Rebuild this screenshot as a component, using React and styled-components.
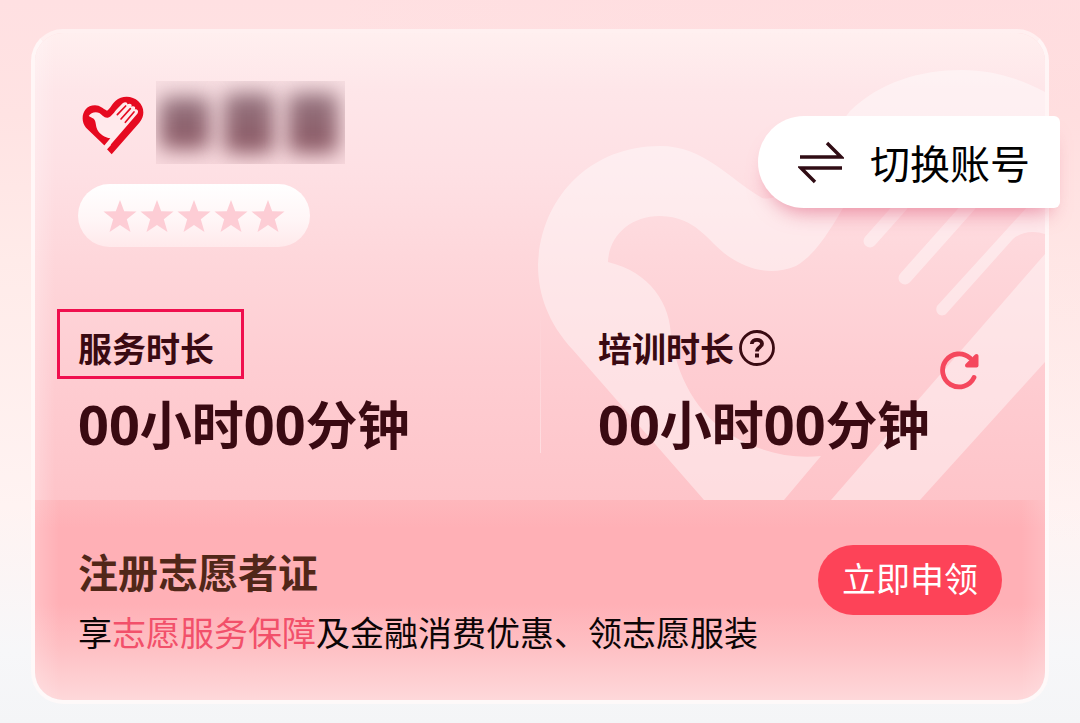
import React, { useState } from 'react'
import styled, { createGlobalStyle } from 'styled-components';

const GlobalStyle = createGlobalStyle`
* {
    box-sizing:border-box;
}
body {
    margin:0;
    font-family:"Noto Sans CJK SC", "Noto Sans", sans-serif;
    color:#3a0a12;
}
button {
    font-family:inherit;
    border:none;
    padding:0;
    cursor:pointer;
}
h2, p {
    margin:0;
}
`;

const Page = styled.main`
min-height:100vh;
padding:29px 31px 19px;
background:
    radial-gradient(ellipse at 100% 15%, rgba(255,210,214,0.3), rgba(255,210,214,0) 50%),
    linear-gradient(180deg, #ffe0e2 0%, #ffe3e3 16%, #ffebe9 36%, #fff3f2 70%, #f7f7f9 90%, #f4f5f7 100%);
`;
const Card = styled.section`
border:4px solid rgba(255,250,249,0.85);
border-top-color:rgba(255,243,243,0.8);
border-radius:32px;
`;
const Overview = styled.div`
position:relative;
padding:48px 0 47px;
border-radius:28px 28px 0 0;
background:
    linear-gradient(90deg, rgba(255,255,255,0.25), rgba(255,255,255,0) 20px),
    linear-gradient(180deg, #ffefef 0%, #fee6e9 12%, #fee0e4 30%, #fed6da 50%, #fecdd2 72%, #fec4c9 100%);
`;
const Watermark = styled.svg`
position:absolute;
right:0;
bottom:0;
width:510px;
height:440px;
`;
const Header = styled.header`
position:relative;
display:flex;
justify-content:space-between;
align-items:flex-start;
padding-left:43px;
`;
const Identity = styled.div`
display:flex;
align-items:center;
gap:12px;
margin-bottom:20px;
`;
const HiddenName = styled.div`
display:flex;
align-items:center;
gap:14px;
width:189px;
height:83px;
padding-left:4px;
overflow:hidden;
background:rgba(160,110,125,0.06);
`;
const Smudge = styled.span`
width:50px;
height:${props => props.$short ? '52px' : '60px'};
border-radius:8px;
background:linear-gradient(180deg, #947580, #8a5662);
filter:blur(10px);
`;
const Stars = styled.div`
display:flex;
align-items:center;
justify-content:center;
gap:3px;
width:232px;
height:63px;
border-radius:32px;
background:linear-gradient(180deg, #fff, #fff5f6 60%, #ffe9eb);
`;
const SwitchBtn = styled.button`
display:flex;
align-items:center;
gap:26px;
height:92px;
margin:35px -15px 0 0;
padding:0 30px 0 40px;
border-radius:46px 6px 6px 46px;
background:#fff;
box-shadow:0 14px 20px -10px rgba(220,80,115,0.6);
color:#000;
font-size:40px;
`;
const Stats = styled.div`
position:relative;
display:grid;
grid-template-columns:1fr 1fr;
margin-top:62px;
`;
const StatCell = styled.div`
display:flex;
align-items:flex-start;
gap:10px;
padding-left:${props => props.$divided ? '36px' : '22px'};
border-left:${props => props.$divided ? '1px solid' : 'none'};
border-image:linear-gradient(180deg, rgba(255,255,255,0), rgba(255,255,255,0.4)) 1;
`;
const StatLabel = styled.div`
display:flex;
align-items:center;
gap:5px;
width:fit-content;
height:70px;
padding:4px 27px 0 18px;
border:3px solid ${props => props.$marked ? '#f00f4e' : 'transparent'};
font-size:34px;
font-weight:700;
line-height:50px;
`;
const StatName = styled.span`
padding-top:4px;
`;
const StatValue = styled.div`
margin-top:14px;
padding-left:21px;
font-size:52px;
font-weight:700;
line-height:60px;
white-space:nowrap;
`;
const Digits = styled.span`
font-family:"Noto Sans", "Open Sans", sans-serif;
font-size:54px;
line-height:50px;
`;
const IconBtn = styled.button`
display:flex;
background:none;
color:${props => props.$red ? '#f5485d' : '#3a0a12'};
margin-top:${props => props.$red ? '42px' : '12px'};
margin-bottom:${props => props.$red ? '0' : '8px'};
`;
const Footer = styled.footer`
display:flex;
justify-content:space-between;
align-items:flex-start;
padding:45px 43px 43px;
border-radius:0 0 28px 28px;
background:
    linear-gradient(90deg, rgba(255,255,255,0.2), rgba(255,255,255,0) 24px, rgba(255,255,255,0) calc(100% - 24px), rgba(255,255,255,0.15)),
    linear-gradient(180deg, #feb7bc 0%, #ffb0b6 14%, #ffb0b6 52%, #fec0c4 74%, #fed8da 100%);
`;
const Title = styled.h2`
margin-bottom:10px;
color:#512719;
font-size:40px;
font-weight:700;
line-height:52px;
`;
const Description = styled.p`
color:#0c0506;
font-size:34px;
line-height:50px;
& span{
    color:#f2506a;
}
`;
const ApplyBtn = styled.button`
flex-shrink:0;
width:184px;
height:70px;
padding-bottom:6px;
border-radius:35px;
background:#fd4358;
color:#fff;
font-size:34px;
`;

const Logo = () => (
    <svg width="66" height="65" viewBox="232 272 198 195" aria-hidden="true">
        <path fill="#e60a20" d="M313 440L256 385C236 362 246 318 283 318C299 318 306 328 319 334C328 329 332 316 345 304C363 288 395 288 413 306C432 324 433 350 416 370L333 465L319 450L331 437L325 427Z" />
        <path fill="#ffeaec" d="M264 350C270 340 284 336 296 341C305 346 309 356 321 355C333 353 340 338 352 326L366 312C372 307 381 308 380 315C388 311 396 315 392 322C400 318 407 323 402 330C411 328 415 336 410 343L318 450L309 441L329 417C312 414 298 405 290 391C283 376 288 362 275 356Z" />
        <path stroke="#e60a20" strokeWidth="5" strokeLinecap="round" fill="none" d="M350 346L375 320M361 359L389 328M374 369L400 338" />
    </svg>
)

const Star = () => (
    <svg width="34" height="34" viewBox="0 0 34 34" aria-hidden="true">
        <path fill="#fdcdd5" d="M17 1L21.200 12.200L33.500 12.600L23.800 20.200L27.500 33L17 26L6.500 33L10.200 20.200L0.500 12.600L12.800 12.200Z" />
    </svg>
)

const HeartWatermark = () => (
    <Watermark viewBox="535 60 510 440" aria-hidden="true">
        <g fill="#fff" fillOpacity="0.42">
            <path d="M704 500L573 350C548 323 538 294 538 265C540 200 588 146 660 146C704 146 728 178 762 198C790 205 820 150 850 111C880 82 920 70 962 70C992 70 1022 79 1045 92L1045 205L845 205C832 226 818 253 796 266C772 276 748 270 728 256C706 240 697 217 660 216C630 216 609 236 608 262C650 272 671 304 671 338C680 386 702 420 740 440C766 453 794 459 821 456L784 500Z" />
            <path d="M1045 254L831 500L920 500L1045 362Z" />
            <path d="M1029 205L1045 205L1045 234C1033 230 1021 232 1013 239L946 314C941 318 934 313 937 306Z" />
        </g>
        <path stroke="#fff" strokeOpacity="0.42" strokeWidth="13" strokeLinecap="round" d="M870 241L902 205M905 278L970 205" />
    </Watermark>
)

const SwapIcon = () => (
    <svg width="46" height="44" viewBox="0 0 46 44" fill="none" stroke="#300c14" strokeWidth="3.400" aria-hidden="true">
        <path d="M2 17H43L29 3M44 28H3L17 42" />
    </svg>
)

const HelpIcon = () => (
    <svg width="36" height="36" viewBox="0 0 36 36" fill="none" stroke="currentColor" aria-hidden="true">
        <circle cx="18" cy="18" r="16.500" strokeWidth="2.800" />
        <path d="M12.800 14C13 8.500 23 8.500 23 13.800C23 17.500 18 17 18 21.500" strokeWidth="3.800" />
        <path d="M18 23.500V27.500" strokeWidth="4" />
    </svg>
)

const RefreshIcon = () => (
    <svg width="39" height="39" viewBox="0 0 39 39" fill="none" aria-hidden="true">
        <path d="M34 26.500A16.500 16.500 0 1 1 30 7" stroke="currentColor" strokeWidth="4.800" strokeLinecap="round" />
        <path d="M36.500 5V14.500H27Z" fill="currentColor" stroke="currentColor" strokeWidth="4" strokeLinejoin="round" />
    </svg>
)

const Duration = ({ time }) => (
    <StatValue>
        <Digits>{time.hours}</Digits>小时<Digits>{time.minutes}</Digits>分钟
    </StatValue>
)

const emptyTime = { hours: '00', minutes: '00' };

export default function App() {

    const [training, setTraining] = useState(emptyTime);

    return (
        <>
            <GlobalStyle />
            <Page>
                <Card>
                    <Overview>
                        <HeartWatermark />
                        <Header>
                            <div>
                                <Identity>
                                    <Logo />
                                    <HiddenName>
                                        <Smudge $short />
                                        <Smudge />
                                        <Smudge />
                                    </HiddenName>
                                </Identity>
                                <Stars>
                                    {[1, 2, 3, 4, 5].map((n) => <Star key={n} />)}
                                </Stars>
                            </div>
                            <SwitchBtn type="button"><SwapIcon />切换账号</SwitchBtn>
                        </Header>
                        <Stats>
                            <StatCell>
                                <div>
                                    <StatLabel $marked><StatName>服务时长</StatName></StatLabel>
                                    <Duration time={emptyTime} />
                                </div>
                            </StatCell>
                            <StatCell $divided>
                                <div>
                                    <StatLabel>
                                        <StatName>培训时长</StatName>
                                        <IconBtn type="button" aria-label="帮助"><HelpIcon /></IconBtn>
                                    </StatLabel>
                                    <Duration time={training} />
                                </div>
                                <IconBtn $red type="button" aria-label="刷新" onClick={() => setTraining({ ...emptyTime })}>
                                    <RefreshIcon />
                                </IconBtn>
                            </StatCell>
                        </Stats>
                    </Overview>
                    <Footer>
                        <div>
                            <Title>注册志愿者证</Title>
                            <Description>享<span>志愿服务保障</span>及金融消费优惠、领志愿服装</Description>
                        </div>
                        <ApplyBtn type="button">立即申领</ApplyBtn>
                    </Footer>
                </Card>
            </Page>
        </>
    )
}
